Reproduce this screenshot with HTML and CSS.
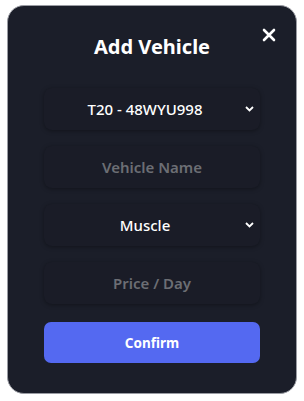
FILE: index.html
```html
<!DOCTYPE html>
<html lang="en">
<head>
    <meta charset="UTF-8">
    <meta name="viewport" content="width=device-width, initial-scale=1.0">
    <title>Add Vehicle</title>
    <link rel="stylesheet" href="styles.css">
</head>
<body>
    <div class="modal">
        <button class="close-btn" aria-label="Close">
            <svg width="14" height="14" viewBox="0 0 14 14">
                <path d="M2 2 L12 12 M12 2 L2 12" stroke="#fff" stroke-width="2.6" stroke-linecap="round"/>
            </svg>
        </button>
        <h1>Add Vehicle</h1>

        <div class="form">
            <div class="field select">
                <span>T20 - 48WYU998</span>
                <svg class="chevron" width="9" height="6" viewBox="0 0 9 6">
                    <path d="M1 1 L4.5 4.5 L8 1" stroke="#fff" stroke-width="1.8" fill="none"/>
                </svg>
            </div>
            <input class="field" type="text" placeholder="Vehicle Name">
            <div class="field select">
                <span>Muscle</span>
                <svg class="chevron" width="9" height="6" viewBox="0 0 9 6">
                    <path d="M1 1 L4.5 4.5 L8 1" stroke="#fff" stroke-width="1.8" fill="none"/>
                </svg>
            </div>
            <input class="field" type="text" placeholder="Price / Day">
            <button class="confirm-btn">Confirm</button>
        </div>
    </div>
</body>
</html>
```

FILE: styles.css
```css
* {
    margin: 0;
    padding: 0;
    box-sizing: border-box;
}

body {
    font-family: "Noto Sans", "DejaVu Sans", sans-serif;
    background: #ffffff;
    padding: 5px 7px 7px 7px;
}

.modal {
    position: relative;
    width: 290px;
    height: 389px;
    background: #1b1e29;
    border: 1px solid #9a9ca3;
    border-radius: 17px;
    padding: 29px 36px 0 36px;
}

.close-btn {
    position: absolute;
    top: 22px;
    right: 20px;
    background: none;
    border: none;
    cursor: pointer;
    display: flex;
}

h1 {
    color: #ffffff;
    font-size: 20px;
    font-weight: 700;
    text-align: center;
    line-height: 24px;
    margin-bottom: 29px;
}

.form {
    display: flex;
    flex-direction: column;
    gap: 16px;
}

.field {
    position: relative;
    height: 42px;
    width: 100%;
    background: #1a1c27;
    border: none;
    border-radius: 8px;
    box-shadow: 0 1px 4px rgba(0, 0, 0, 0.35);
    color: #ffffff;
    font-family: inherit;
    font-size: 15px;
    font-weight: 500;
    text-align: center;
    outline: none;
}

.field::placeholder {
    color: #6c6e74;
    font-weight: 600;
}

.select {
    display: flex;
    align-items: center;
    justify-content: center;
    padding-right: 14px;
}

.chevron {
    position: absolute;
    right: 6px;
    top: 18px;
}

.confirm-btn {
    margin-top: 2px;
    height: 41px;
    background: #5469f1;
    color: #ffffff;
    border: none;
    border-radius: 7px;
    font-family: inherit;
    font-size: 13.5px;
    font-weight: 700;
    cursor: pointer;
}
```
